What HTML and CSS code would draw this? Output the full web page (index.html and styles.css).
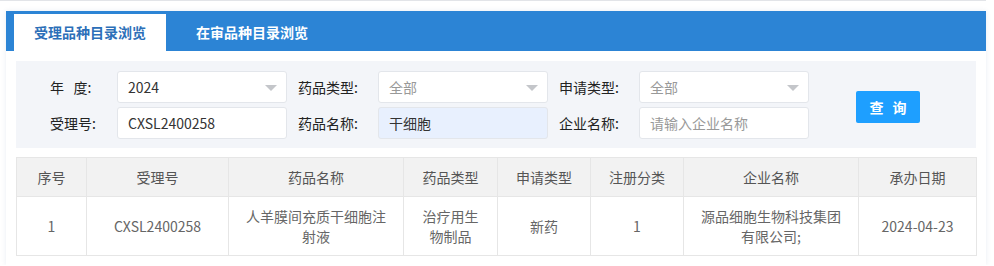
FILE: index.html
```html
<!DOCTYPE html>
<html lang="zh-CN">
<head>
<meta charset="utf-8">
<title>品种目录浏览</title>
<link rel="stylesheet" href="styles.css">
</head>
<body>
<div class="topline"></div>
<div class="panel">
  <div class="tabs">
    <div class="tab active">受理品种目录浏览</div>
    <div class="tab">在审品种目录浏览</div>
  </div>
  <div class="filter">
    <label class="lbl first">年&nbsp;&nbsp;&nbsp;度:</label>
    <div class="field select"><span class="val">2024</span><span class="caret"></span></div>
    <label class="lbl">药品类型:</label>
    <div class="field select"><span class="ph">全部</span><span class="caret"></span></div>
    <label class="lbl">申请类型:</label>
    <div class="field select"><span class="ph">全部</span><span class="caret"></span></div>
    <div class="btn-cell"><button class="btn">查 询</button></div>

    <label class="lbl first">受理号:</label>
    <div class="field"><span class="val">CXSL2400258</span></div>
    <label class="lbl">药品名称:</label>
    <div class="field filled"><span class="val">干细胞</span></div>
    <label class="lbl">企业名称:</label>
    <div class="field"><span class="ph">请输入企业名称</span></div>
  </div>
  <table class="grid">
    <colgroup>
      <col class="c1"><col class="c2"><col class="c3"><col class="c4">
      <col class="c5"><col class="c6"><col class="c7"><col class="c8">
    </colgroup>
    <thead>
      <tr><th>序号</th><th>受理号</th><th>药品名称</th><th>药品类型</th><th>申请类型</th><th>注册分类</th><th>企业名称</th><th>承办日期</th></tr>
    </thead>
    <tbody>
      <tr><td>1</td><td>CXSL2400258</td><td>人羊膜间充质干细胞注射液</td><td>治疗用生物制品</td><td>新药</td><td>1</td><td>源品细胞生物科技集团有限公司;</td><td>2024-04-23</td></tr>
    </tbody>
  </table>
</div>
</body>
</html>
```
FILE: styles.css
```css
html, body {
  margin: 0;
  padding: 0;
  background: #ffffff;
  font-family: "Noto Sans CJK SC", "Microsoft YaHei", "Liberation Sans", sans-serif;
  font-size: 14px;
  color: #333;
}
.topline {
  width: 986px;
  height: 1px;
  background: #e2e4e8;
}
.panel {
  margin: 10px 0 0 6px;
  width: 980px;
  padding-bottom: 9px;
  background: #fff;
  box-shadow: 0 0 5px rgba(40, 80, 140, 0.10);
}
.tabs {
  height: 40px;
  background: #2c84d5;
  display: flex;
  align-items: flex-end;
  padding-left: 8px;
  gap: 10px;
}
.tab {
  height: 37px;
  line-height: 37px;
  padding: 0 20px;
  color: #fff;
  font-size: 14px;
  font-weight: 600;
}
.tab.active {
  background: #fff;
  color: #2c6fb8;
}
.filter {
  margin: 10px 10px 0;
  background: #f3f5f9;
  padding: 10px 0 9px;
  display: grid;
  grid-template-columns: 101px 170px 91px 170px 91px 170px 1fr;
  grid-template-rows: 32px 32px;
  row-gap: 4px;
}
.lbl {
  display: flex;
  align-items: center;
  padding-left: 11px;
  color: #222;
  white-space: pre;
}
.lbl.first {
  padding-left: 34px;
}
.field {
  position: relative;
  background: #fff;
  border: 1px solid #e3e6eb;
  border-radius: 3px;
  display: flex;
  align-items: center;
  padding-left: 10px;
}
.field.filled {
  background: #e8f0fe;
}
.val { color: #333; }
.ph { color: #999; }
.caret {
  position: absolute;
  right: 9px;
  top: 13px;
  width: 0;
  height: 0;
  border-left: 6px solid transparent;
  border-right: 6px solid transparent;
  border-top: 6px solid #c4c6ca;
}
.btn-cell {
  grid-row: 1 / span 2;
  grid-column: 7;
  padding-left: 47px;
  padding-top: 20px;
}
.btn {
  width: 64px;
  height: 32px;
  border: none;
  border-radius: 2px;
  background: #1e9fff;
  color: #fff;
  font-family: inherit;
  font-size: 14px;
  font-weight: 700;
  letter-spacing: 3px;
  padding: 0 0 0 3px;
}
.grid {
  margin: 9px 10px 0;
  width: 960px;
  border-collapse: collapse;
  table-layout: fixed;
  border: 1px solid #e6e6e6;
}
.c1 { width: 70px; }
.c2 { width: 142px; }
.c3 { width: 175px; }
.c4 { width: 94px; }
.c5 { width: 93px; }
.c6 { width: 93px; }
.c7 { width: 175px; }
.c8 { width: 118px; }
.grid th, .grid td {
  border: 1px solid #e6e6e6;
  text-align: center;
  padding: 0 15px;
  font-weight: normal;
  line-height: 20px;
}
.grid th {
  height: 38px;
  background: #f2f2f2;
  color: #555;
}
.grid td {
  height: 58px;
  color: #666;
}
```
